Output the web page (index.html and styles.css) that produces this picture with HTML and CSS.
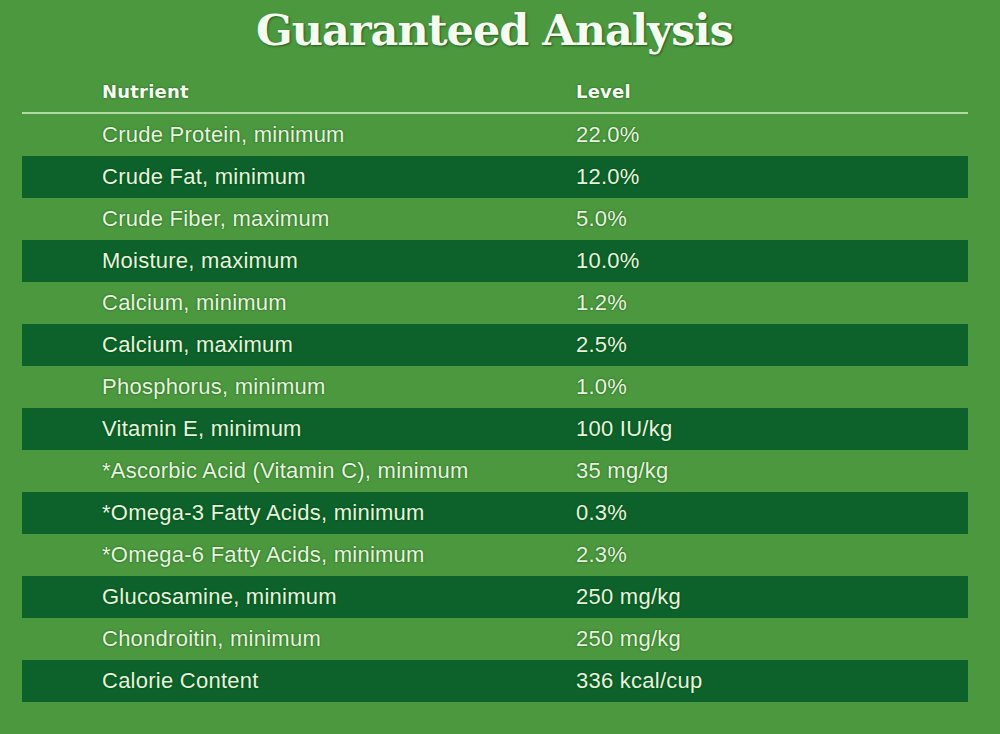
FILE: index.html
```html
<!DOCTYPE html>
<html lang="en">
<head>
<meta charset="utf-8">
<title>Guaranteed Analysis</title>
<link rel="stylesheet" href="styles.css">
</head>
<body>
<main class="page">
  <h1 class="title">Guaranteed Analysis</h1>
  <div class="table">
    <div class="row head"><div class="cell name">Nutrient</div><div class="cell level">Level</div></div>
    <div class="row"><div class="cell name">Crude Protein, minimum</div><div class="cell level">22.0%</div></div>
    <div class="row dark"><div class="cell name">Crude Fat, minimum</div><div class="cell level">12.0%</div></div>
    <div class="row"><div class="cell name">Crude Fiber, maximum</div><div class="cell level">5.0%</div></div>
    <div class="row dark"><div class="cell name">Moisture, maximum</div><div class="cell level">10.0%</div></div>
    <div class="row"><div class="cell name">Calcium, minimum</div><div class="cell level">1.2%</div></div>
    <div class="row dark"><div class="cell name">Calcium, maximum</div><div class="cell level">2.5%</div></div>
    <div class="row"><div class="cell name">Phosphorus, minimum</div><div class="cell level">1.0%</div></div>
    <div class="row dark"><div class="cell name">Vitamin E, minimum</div><div class="cell level">100 IU/kg</div></div>
    <div class="row"><div class="cell name">*Ascorbic Acid (Vitamin C), minimum</div><div class="cell level">35 mg/kg</div></div>
    <div class="row dark"><div class="cell name">*Omega-3 Fatty Acids, minimum</div><div class="cell level">0.3%</div></div>
    <div class="row"><div class="cell name">*Omega-6 Fatty Acids, minimum</div><div class="cell level">2.3%</div></div>
    <div class="row dark"><div class="cell name">Glucosamine, minimum</div><div class="cell level">250 mg/kg</div></div>
    <div class="row"><div class="cell name">Chondroitin, minimum</div><div class="cell level">250 mg/kg</div></div>
    <div class="row dark"><div class="cell name">Calorie Content</div><div class="cell level">336 kcal/cup</div></div>
  </div>
</main>
</body>
</html>
```
FILE: styles.css
```css
html, body {
  margin: 0;
  padding: 0;
  background: #4b983f;
}
.page {
  width: 1000px;
  height: 734px;
  background: #4b983f;
  overflow: hidden;
}
.title {
  margin: 0;
  padding: 5px 11px 0 0;
  height: 63px;
  text-align: center;
  font-family: "DejaVu Serif", serif;
  font-weight: bold;
  font-size: 43px;
  line-height: 50px;
  letter-spacing: -1px;
  color: #f4fbef;
  text-shadow: 1px 1px 2px rgba(20, 60, 20, 0.7);
}
.table {
  margin: 0 32px 0 22px;
  font-family: "Liberation Sans", Arial, sans-serif;
  color: #e6f5de;
}
.row {
  display: grid;
  grid-template-columns: 554px 1fr;
  height: 42px;
  align-items: center;
  font-size: 22px;
  letter-spacing: 0.25px;
  text-shadow: 0 0 2px rgba(10, 50, 10, 0.7);
}
.row.head {
  height: 46px;
  border-bottom: 2px solid #b2daa3;
  box-sizing: border-box;
  font-family: "DejaVu Sans", Verdana, sans-serif;
  font-size: 18px;
  font-weight: bold;
  letter-spacing: 0.2px;
  color: #f6fbf2;
  padding-top: 2px;
}
.row.dark {
  background: #0c622a;
}
.cell.name {
  padding-left: 80px;
}
```
